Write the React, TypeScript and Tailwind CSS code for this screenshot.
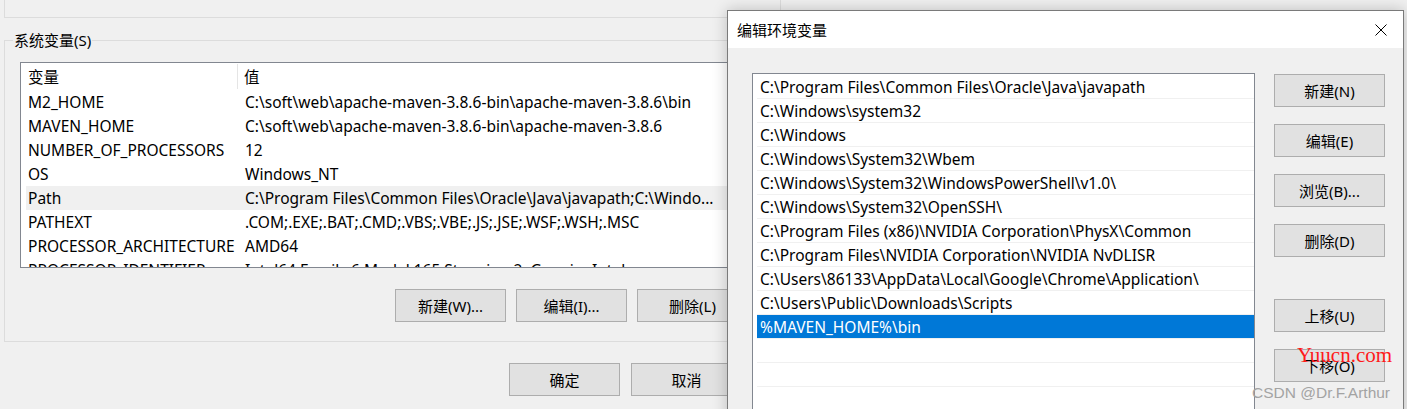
import React from "react";

const sysVars: [string, string][] = [
    ["M2_HOME", "C:\\soft\\web\\apache-maven-3.8.6-bin\\apache-maven-3.8.6\\bin"],
    ["MAVEN_HOME", "C:\\soft\\web\\apache-maven-3.8.6-bin\\apache-maven-3.8.6"],
    ["NUMBER_OF_PROCESSORS", "12"],
    ["OS", "Windows_NT"],
    ["Path", "C:\\Program Files\\Common Files\\Oracle\\Java\\javapath;C:\\Windo..."],
    ["PATHEXT", ".COM;.EXE;.BAT;.CMD;.VBS;.VBE;.JS;.JSE;.WSF;.WSH;.MSC"],
    ["PROCESSOR_ARCHITECTURE", "AMD64"],
    ["PROCESSOR_IDENTIFIER", "Intel64 Family 6 Model 165 Stepping 2, GenuineIntel"],
];

const paths = [
    "C:\\Program Files\\Common Files\\Oracle\\Java\\javapath",
    "C:\\Windows\\system32",
    "C:\\Windows",
    "C:\\Windows\\System32\\Wbem",
    "C:\\Windows\\System32\\WindowsPowerShell\\v1.0\\",
    "C:\\Windows\\System32\\OpenSSH\\",
    "C:\\Program Files (x86)\\NVIDIA Corporation\\PhysX\\Common",
    "C:\\Program Files\\NVIDIA Corporation\\NVIDIA NvDLISR",
    "C:\\Users\\86133\\AppData\\Local\\Google\\Chrome\\Application\\",
    "C:\\Users\\Public\\Downloads\\Scripts",
    "%MAVEN_HOME%\\bin",
    "",
    "",
];

const WinButton = ({label}: { label: string }) => (
    <button type="button"
            className="w-[111px] h-[33px] bg-[#e1e1e1] border border-[#adadad] flex items-center justify-center text-[15px] text-black">
        {label}
    </button>
);

export default function App() {
    return (
        <div className="relative w-[1407px] h-[409px] overflow-hidden bg-[#f0f0f0] text-[15.5px] leading-[20px] text-black font-['Noto_Sans','Noto_Sans_CJK_SC',sans-serif]">

            {/* Environment variables window (behind) */}
            <div className="w-[800px] pl-[4px]">
                {/* user variables group, bottom edge only */}
                <div className="h-[18px] w-[777px] border-l border-r border-b border-[#dcdcdc]"/>

                <fieldset className="mt-[12px] w-[777px] h-[312px] border border-[#dcdcdc] p-0 m-0">
                    <legend className="ml-[8px] px-[1px] h-[20px] text-[15px]">系统变量(S)</legend>

                    <div className="ml-[15px] mt-[12px] w-[760px] h-[206px] border border-[#828790] bg-white overflow-hidden">
                        <div className="flex h-[27px] items-center">
                            <div className="w-[217px] pl-[7px] h-[25px] flex items-center border-r border-[#e5e5e5]">变量</div>
                            <div className="pl-[6px]">值</div>
                        </div>
                        {sysVars.map(([name, value]) => (
                            <div key={name}
                                 className={`ml-[5px] flex h-[24px] items-center whitespace-nowrap ${name === "Path" ? "bg-[#f0f0f0]" : ""}`}>
                                <div className="w-[212px] pl-[2px]">{name}</div>
                                <div className="pl-[7px]">{value}</div>
                            </div>
                        ))}
                    </div>

                    <div className="mt-[21px] ml-[390px] flex gap-[10px]">
                        <WinButton label="新建(W)..."/>
                        <WinButton label="编辑(I)..."/>
                        <WinButton label="删除(L)"/>
                    </div>
                </fieldset>

                <div className="mt-[21px] ml-[505px] flex gap-[11px]">
                    <WinButton label="确定"/>
                    <WinButton label="取消"/>
                </div>
            </div>

            {/* Edit environment variable dialog */}
            <div className="absolute left-[727px] top-[10px] w-[677px] h-[420px] border border-[#7a7a7a] bg-[#f0f0f0] shadow-[0_0_14px_rgba(0,0,0,0.22)] flex flex-col">
                <div className="shrink-0 h-[37px] bg-white flex items-center justify-between pl-[9px] text-[15px]">
                    <span>编辑环境变量</span>
                    <div className="w-[44px] h-full flex items-center justify-center">
                        <svg width="12" height="12" viewBox="0 0 12 12" fill="none" stroke="#000" strokeWidth="1">
                            <path d="M0.5 0.5 L11.5 11.5 M11.5 0.5 L0.5 11.5"/>
                        </svg>
                    </div>
                </div>

                <div className="flex pl-[24px] pt-[25px]">
                    <div className="w-[503px] h-[340px] border border-[#828790] bg-white pt-[1px]">
                        {paths.map((p, i) => (
                            <div key={i}
                                 className={`ml-[4px] h-[24px] pl-[3px] flex items-center border-b border-[#f0f0f0] whitespace-nowrap ${p === "%MAVEN_HOME%\\bin" ? "bg-[#0078d7] text-white" : ""}`}>
                                {p}
                            </div>
                        ))}
                    </div>

                    <div className="ml-[19px] mt-[1px] flex flex-col gap-[17px]">
                        <WinButton label="新建(N)"/>
                        <WinButton label="编辑(E)"/>
                        <WinButton label="浏览(B)..."/>
                        <WinButton label="删除(D)"/>
                        <div className="mt-[25px] flex flex-col gap-[17px]">
                            <WinButton label="上移(U)"/>
                            <WinButton label="下移(O)"/>
                        </div>
                    </div>
                </div>
            </div>

            {/* watermarks */}
            <span className="absolute left-[1297px] top-[343px] text-[21px] leading-[24px] text-[#ff1a1a] font-['Liberation_Serif',serif]">
                Yuucn.com
            </span>
            <span className="absolute left-[1252px] top-[383px] text-[15.5px] leading-[20px] text-[#a3a3a3] font-['Liberation_Sans',sans-serif]">
                CSDN @Dr.F.Arthur
            </span>
        </div>
    );
}
